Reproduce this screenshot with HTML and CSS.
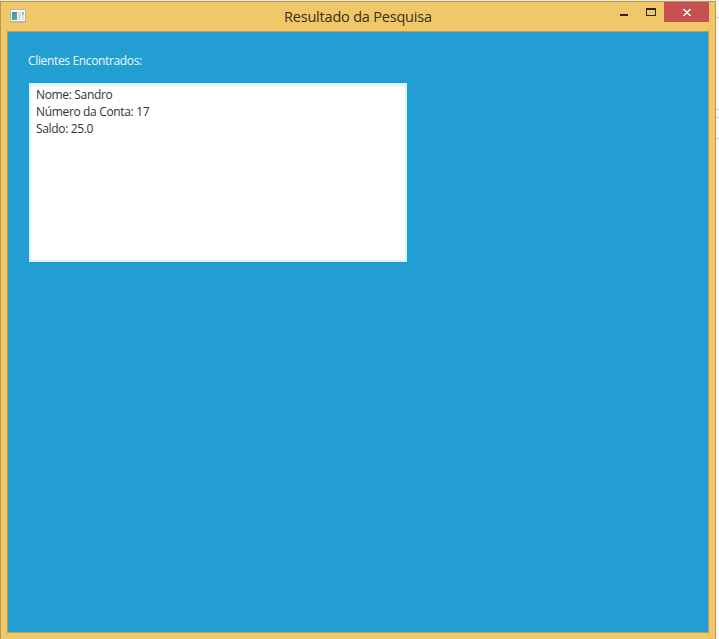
FILE: index.html
```html
<!DOCTYPE html>
<html lang="pt-BR">
<head>
<meta charset="utf-8">
<title>Resultado da Pesquisa</title>
<link rel="stylesheet" href="styles.css">
</head>
<body>
<div class="desktop">
  <main class="window">
    <header class="titlebar">
      <svg class="app-icon" width="16" height="14" viewBox="0 0 16 14" shape-rendering="crispEdges">
        <defs><linearGradient id="pane" x2="0.4" y2="1"><stop stop-color="#4b83b5"/><stop offset="1" stop-color="#55b184"/></linearGradient></defs>
        <path fill="#b9b6aa" d="M0 0h16v14H0z"/>
        <path fill="#f6f6f6" d="M1 1h14v11H1z"/>
        <path fill="url(#pane)" d="M2 3h5v8H2z"/>
        <path fill="#dcdce2" d="M8 3h3v8H8z"/>
        <path fill="#8fc4ad" d="M12 3h2v3h-2z"/>
        <path fill="#dde3e6" d="M12 6h2v5h-2z"/>
      </svg>
      <h1 class="title">Resultado da Pesquisa</h1>
      <div class="controls">
        <svg class="minimize" width="8" height="2"><path fill="#292623" d="M0 0h8v2H0z"/></svg>
        <svg class="maximize" width="10" height="8" shape-rendering="crispEdges"><path fill="#292623" fill-rule="evenodd" d="M0 0h10v8H0zM1 2v5h8V2z"/></svg>
        <div class="close"><svg width="8" height="7" viewBox="0 0 8 7" shape-rendering="crispEdges"><path fill="#fff" d="M0 0h2v1H0zM6 0h2v1H6zM1 1h2v1H1zM5 1h2v1H5zM2 2h4v1H2zM3 3h2v1H3zM2 4h4v1H2zM1 5h2v1H1zM5 5h2v1H5zM0 6h2v1H0zM6 6h2v1H6z"/></svg></div>
      </div>
    </header>
    <section class="content">
      <p class="label">Clientes Encontrados:</p>
      <div class="results">
        <p>Nome: Sandro</p>
        <p>Número da Conta: 17</p>
        <p>Saldo: 25.0</p>
      </div>
    </section>
  </main>
  <aside class="behind"><i class="line first"></i><i class="line second"></i><i class="line third"></i><i class="line fourth"></i></aside>
</div>
</body>
</html>
```
FILE: styles.css
```css
* { box-sizing: border-box; }
body { margin: 0; overflow: hidden; background: #f7f7f7; font-family: "Open Sans", "Noto Sans", sans-serif; }
p, h1 { margin: 0; font-weight: 400; }
svg { display: block; }
.desktop { display: flex; width: 719px; height: 639px; padding-top: 1px; background: linear-gradient(#e9eaea 1px, #f7f7f7 1px); }
.window { width: 716px; height: 640px; flex: none; border: 1px solid #b59a58; background: #f0c869; padding: 0 6px; }
.titlebar { display: grid; grid-template-columns: 18px 1fr 100px; height: 29px; }
.app-icon { margin: 7px 0 0 3px; }
.title { font-size: 14.5px; line-height: 29px; color: #382f1c; white-space: nowrap; padding-left: 259px; letter-spacing: -0.2px; }
.controls { display: flex; align-items: flex-start; justify-content: flex-end; }
.minimize { margin: 12px 18px 0 0; flex: none; }
.maximize { margin: 6px 8px 0 0; flex: none; }
.close { width: 45px; height: 20px; flex: none; display: flex; justify-content: center; padding-top: 7px; background: #c75050; }
.content { height: 602px; border: 1px solid #b99e5c; background: #229ed3; padding: 20px; }
.label { margin-bottom: 13px; height: 18px; line-height: 18px; font-size: 12px; color: #edf7fc; letter-spacing: -0.35px; white-space: nowrap; }
.results { margin-left: 1px; width: 378px; height: 179px; border: 2px solid #e0f2fa; background: #fff; padding: 1px 5px; box-shadow: 0 0 2px #00a6df, inset 0 2px 1px #f0f1f2; }
.results p { height: 17px; line-height: 17px; font-size: 12px; color: #333; letter-spacing: -0.34px; white-space: nowrap; }
.behind { flex: 1; display: flex; flex-direction: column; }
.line { height: 1px; background: #cfcfcf; flex: none; }
.first { margin-top: 16px; }
.second { margin-top: 91px; }
.third { margin-top: 7px; }
.fourth { margin-top: 20px; }
```
